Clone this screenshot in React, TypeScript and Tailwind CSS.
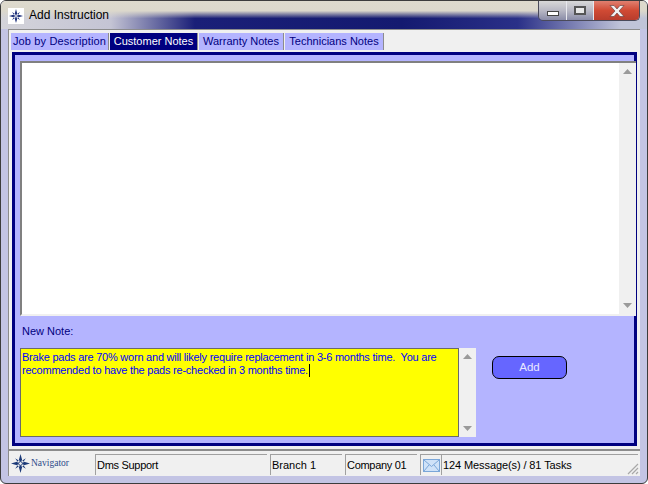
import React from "react";

const font = "font-['Liberation_Sans',Arial,sans-serif]";

function Logo({ size = 16, color = "#1c2f7a" }: { size?: number; color?: string }) {
  return (
    <svg width={size} height={size} viewBox="0 0 16 16">
      <path d="M8 0 L9.4 5 L8 6.5 L6.6 5 Z M8 16 L6.6 11 L8 9.5 L9.4 11 Z M0 8 L5 6.6 L6.5 8 L5 9.4 Z M16 8 L11 9.4 L9.5 8 L11 6.6 Z" fill={color} />
      <path d="M3.5 3.5 L6.5 5.5 L5.5 6.5 Z M12.5 3.5 L10.5 6.5 L9.5 5.5 Z M3.5 12.5 L5.5 9.5 L6.5 10.5 Z M12.5 12.5 L9.5 10.5 L10.5 9.5 Z" fill={color} />
      <circle cx="8" cy="8" r="1.6" fill="none" stroke={color} strokeWidth="0.8" />
    </svg>
  );
}

function Arrow({ up }: { up?: boolean }) {
  return (
    <svg width="9" height="5" viewBox="0 0 9 5">
      <path d={up ? "M4.5 0 L9 5 L0 5 Z" : "M0 0 L9 0 L4.5 5 Z"} fill="#9a9a9a" />
    </svg>
  );
}

function ScrollBar({ className }: { className: string }) {
  return (
    <div className={`flex flex-col items-center justify-between bg-[#f0f0f0] py-[6px] ${className}`}>
      <Arrow up />
      <Arrow />
    </div>
  );
}

function Tab({ label, active, width }: { label: string; active?: boolean; width: string }) {
  return (
    <div
      className={`h-[17px] ${width} flex items-center justify-center whitespace-nowrap text-[11px] border-r border-[#8c8c8c] ${
        active ? "bg-[#000080] text-white" : "bg-[#b4b4ff] text-[#000080]"
      }`}
    >
      {label}
    </div>
  );
}

function StatusCell({ children, className }: { children: React.ReactNode; className: string }) {
  return (
    <div className={`h-[21px] flex items-center pl-[1px] border-t border-l border-[#a0a0a0] text-[11px] text-black whitespace-nowrap ${className}`}>
      {children}
    </div>
  );
}

export default function App() {
  return (
    <div
      className={`${font} w-[648px] h-[484px] flex flex-col overflow-hidden rounded-t-[6px] rounded-b-[6px] border border-[#3c3c3c] bg-[#c3c4e4]`}
    >
      {/* Title bar */}
      <div className="h-[28px] shrink-0 flex items-start justify-between bg-[linear-gradient(180deg,#dedacd_0%,#dcd8cc_35%,rgba(220,216,204,0)_62%),linear-gradient(90deg,#d4d4da_0%,#c4c4d4_17%,#1a1f78_30%,#141a70_62%,#2a3088_80%,#c0c4d8_96%)]">
        <div className="flex items-center gap-[5px] pl-[7px] pt-[7px]">
          <div className="w-[16px] h-[16px] bg-white flex items-center justify-center">
            <Logo size={14} />
          </div>
          <span className="text-[12px] leading-[14px] mb-[2px] text-black">Add Instruction</span>
        </div>
        <div className="mr-[7px] flex h-[20px] rounded-b-[5px] overflow-hidden border border-t-0 border-[#4a4a5a]">
          <div className="w-[28px] flex items-center justify-center border-r border-[#e8e8ee] bg-[linear-gradient(180deg,#d8d8d8,#b8b8c4_50%,#8a8ca8)]">
            <div className="w-[12px] h-[5px] mt-[5px] bg-white border border-[#444]" />
          </div>
          <div className="w-[27px] flex items-center justify-center border-r border-[#e8e8ee] bg-[linear-gradient(180deg,#d8d8d8,#b8b8c4_50%,#8a8ca8)]">
            <div className="w-[12px] h-[9px] bg-[#e8e8e8] border-2 border-[#555]" />
          </div>
          <div className="w-[45px] flex items-center justify-center bg-[linear-gradient(180deg,#e08070,#d04a34_50%,#b83c2c)]">
            <svg width="16" height="12" viewBox="0 0 16 12">
              <path d="M1 0.5 H5 L8 4 L11 0.5 H15 L10 6 L15 11.5 H11 L8 8 L5 11.5 H1 L6 6 Z" fill="#f2f2f2" stroke="#5a3a3a" strokeWidth="0.6" />
            </svg>
          </div>
        </div>
      </div>

      {/* Client area */}
      <div className="mx-[7px] flex-1 flex flex-col bg-[#f0f0f0] border-t border-l border-[#8c8c8c]">
        <div className="flex pl-[2px] pt-[3px] h-[22px] shrink-0">
          <Tab label="Job by Description" width="w-[98px] mr-[1px] tracking-[0.15px]" />
          <Tab label="Customer Notes" active width="w-[88px] mr-[1px]" />
          <Tab label="Warranty Notes" width="w-[85px] mr-[1px]" />
          <Tab label="Technicians Notes" width="w-[99px]" />
        </div>

        <div className="ml-[3px] mr-[3px] h-[394px] flex flex-col border-[3px] border-[#000080] bg-[#b4b4ff]">
          <div className="mt-[6px] ml-[5px] -mr-[2px] h-[255px] flex border-t-2 border-l-2 border-[#808080] border-b-2 border-b-[#f0f0f0]">
            <div className="flex-1 bg-white" />
            <ScrollBar className="w-[17px]" />
          </div>
          <div className="ml-[7px] mt-[7px] h-[22px] text-[11px] text-[#000080]">New Note:</div>
          <div className="flex ml-[5px] mt-[3px]">
            <div className="w-[439px] h-[89px] bg-[#ffff00] border border-[#6a6a6a] px-[1px] pt-[2px] text-[11px] tracking-[-0.23px] leading-[13px] text-[#0000ff] whitespace-nowrap">
              Brake pads are 70% worn and will likely require replacement in 3-6 months time.&nbsp; You are
              <br />
              recommended to have the pads re-checked in 3 months time.
              <span className="inline-block w-[1px] h-[13px] align-top ml-[1px] bg-black" />
            </div>
            <ScrollBar className="w-[17px] h-[89px]" />
            <button className="ml-[16px] mt-[8px] w-[75px] h-[23px] rounded-[7px] border border-black bg-[#6666ff] text-[11.5px] text-[#e8e8ff]">
              Add
            </button>
          </div>
        </div>

        {/* Status bar */}
        <div className="mt-[3px] flex-1 border-t-2 border-[#8c8c8c] flex items-end pb-[1px] pl-[1px] gap-[3px] relative">
          <div className="w-[82px] h-[24px] flex items-center gap-[1px] pl-[1px]">
            <Logo size={19} color="#1c3a78" />
            <span className="font-['Liberation_Serif',serif] text-[9.5px] text-[#2c4a8a]">Navigator</span>
          </div>
          <StatusCell className="w-[172px] tracking-[-0.3px]">Dms Support</StatusCell>
          <StatusCell className="w-[72px]">Branch 1</StatusCell>
          <StatusCell className="w-[72px] tracking-[-0.3px]">Company 01</StatusCell>
          <div className="flex">
            <div className="h-[21px] w-[21px] flex items-center justify-center border-t border-l border-[#a0a0a0]">
              <svg width="17" height="13" viewBox="0 0 17 13">
                <rect x="0.5" y="0.5" width="16" height="12" fill="#cfe2f8" stroke="#7aa6d8" />
                <path d="M1 1 L8.5 7.5 L16 1 M1 12 L6 6 M16 12 L11 6" fill="none" stroke="#7aa6d8" />
              </svg>
            </div>
            <StatusCell className="w-[197px] tracking-[-0.1px]">124 Message(s) / 81 Tasks</StatusCell>
          </div>
          <svg className="absolute right-[1px] bottom-[1px]" width="12" height="12" viewBox="0 0 12 12">
            <path d="M11 1 L1 11 M11 5 L5 11 M11 9 L9 11" stroke="#a8a8a8" strokeWidth="1.2" />
          </svg>
        </div>
      </div>
      <div className="h-[7px] shrink-0" />
    </div>
  );
}
